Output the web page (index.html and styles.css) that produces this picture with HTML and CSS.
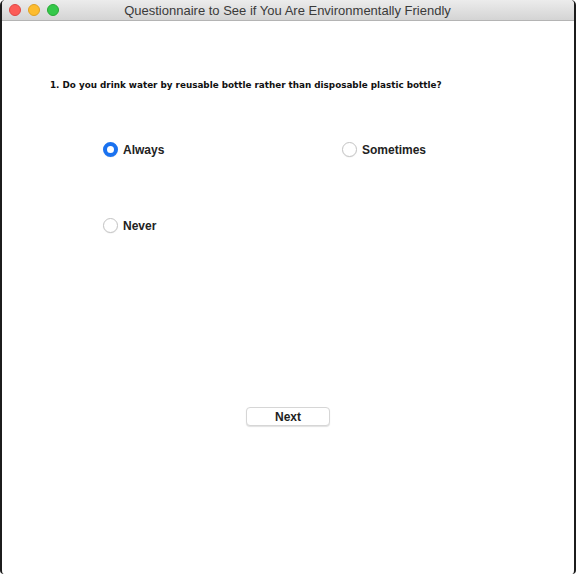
FILE: index.html
```html
<!DOCTYPE html>
<html>
<head>
<meta charset="utf-8">
<link rel="stylesheet" href="styles.css">
<title>Questionnaire</title>
</head>
<body>
<div class="window">
  <div class="titlebar">
    <div class="lights">
      <span class="light red"></span>
      <span class="light yellow"></span>
      <span class="light green"></span>
    </div>
    <div class="title">Questionnaire to See if You Are Environmentally Friendly</div>
  </div>
  <div class="content">
    <p class="question">1. Do you drink water by reusable bottle rather than disposable plastic bottle?</p>
    <div class="options">
      <label class="option"><span class="radio checked"></span>Always</label>
      <label class="option"><span class="radio"></span>Sometimes</label>
      <label class="option"><span class="radio"></span>Never</label>
    </div>
    <div class="actions">
      <button class="btn">Next</button>
    </div>
  </div>
</div>
</body>
</html>
```
FILE: styles.css
```css
html, body {
  margin: 0;
  padding: 0;
  background: #ffffff;
}
body {
  width: 578px;
  height: 574px;
  overflow: hidden;
  font-family: "Liberation Sans", Arial, sans-serif;
}
.window {
  box-sizing: border-box;
  width: 576px;
  height: 574px;
  border-left: 2px solid #1c1c1c;
  border-right: 2px solid #1c1c1c;
  border-radius: 5px 5px 4px 4px;
  display: flex;
  flex-direction: column;
  background: #fff;
}
.titlebar {
  height: 20px;
  flex: 0 0 20px;
  background: linear-gradient(#ececec, #d4d4d4);
  border-bottom: 1px solid #b4b4b4;
  border-radius: 4px 4px 0 0;
  display: flex;
  align-items: center;
}
.lights {
  display: flex;
  gap: 7px;
  padding-left: 7px;
}
.light {
  width: 12px;
  height: 12px;
  border-radius: 50%;
  box-sizing: border-box;
}
.red { background: #fc5c57; border: 1px solid #df4744; }
.yellow { background: #fdbc2e; border: 1px solid #dea123; }
.green { background: #34c84a; border: 1px solid #27aa35; }
.title {
  flex: 1;
  text-align: center;
  font-size: 13px;
  color: #3a3a3a;
  margin-right: 58px;
}
.content {
  flex: 1;
  display: flex;
  flex-direction: column;
}
.question {
  margin: 59px 0 0 48px;
  font-family: "DejaVu Sans", Verdana, sans-serif;
  font-size: 8.8px;
  font-weight: bold;
  color: #111;
  line-height: 11px;
}
.options {
  display: grid;
  grid-template-columns: 239px 200px;
  row-gap: 61px;
  margin: 51px 0 0 101px;
}
.option {
  display: flex;
  align-items: center;
  gap: 5px;
  font-size: 12px;
  font-weight: bold;
  color: #222;
  height: 15px;
}
.radio {
  box-sizing: border-box;
  width: 15px;
  height: 15px;
  border-radius: 50%;
  border: 1px solid #c4c4c4;
  background: #fff;
  box-shadow: 0 0.5px 1px rgba(0,0,0,0.08);
}
.radio.checked {
  border: 4px solid #1a72f0;
  background: #fff;
}
.actions {
  display: flex;
  justify-content: center;
  margin-top: 174px;
}
.btn {
  font-family: "Liberation Sans", Arial, sans-serif;
  font-size: 12px;
  font-weight: bold;
  color: #1e1e1e;
  width: 84px;
  height: 19px;
  background: #fff;
  border: 1px solid #d6d6d6;
  border-radius: 4px;
  box-shadow: 0 1px 1px rgba(0,0,0,0.12);
  padding: 0;
}
```
